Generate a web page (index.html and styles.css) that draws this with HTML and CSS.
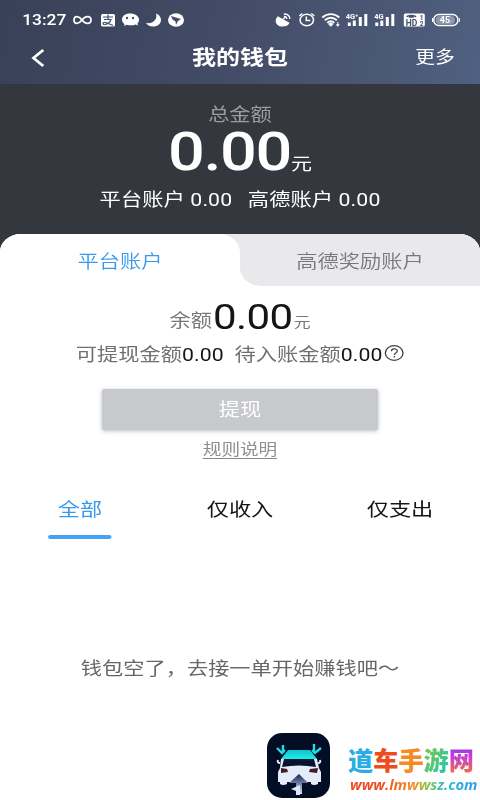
FILE: index.html
```html
<!DOCTYPE html>
<html lang="zh-CN">
<head>
<meta charset="utf-8">
<title>我的钱包</title>
<link rel="stylesheet" href="styles.css">
</head>
<body>
<div class="viewport">
<main class="screen">
  <header class="top">
    <div class="status">
      <span class="clock">13:27</span>
      <svg class="status-left" viewBox="72 0 114 24" preserveAspectRatio="none" fill="none">
        <path d="M82 20c-3-4-8-5-8 0s5 4 8 0 9-5 9 0-6 4-9 0" stroke="#fff" stroke-width="1.8"/>
        <rect x="101" y="14" width="14" height="12.500" rx="1.500" fill="#fff"/>
        <path d="M103 17h10M108 14.500v5M104 19.500h7c-1 3-4 5-7 5-2 0-1-3 2-2l7 3" stroke="#454f69" stroke-width="1.200"/>
        <path d="M130 13.500c-5 0-8 2.700-8 5.900 0 2 1 3.600 2.600 4.600l-.6 2 2.800-1.200c4 1 7.400.4 8.700-.4l2.500 1-.6-2c1-1 1.600-2.400 1.600-4 0-3.200-4-5.900-9-5.900z" fill="#fff"/>
        <circle cx="127" cy="18" r="1.200" fill="#454f69"/><circle cx="133" cy="18" r="1.200" fill="#454f69"/>
        <path d="M156 13.500c3 1 5 3.600 5 6.500 0 3.800-3.500 6.500-8 6.500-3.200 0-6-1.400-7-3.700 6 1.700 12-3 10-9.300z" fill="#fff"/>
        <ellipse cx="176" cy="20" rx="8" ry="6.700" fill="#fff"/>
        <path d="M171 16l10 3-3 2-2 4-.5-3.500-3-2z" fill="#454f69"/>
      </svg>
      <svg class="status-right" viewBox="274 0 186 24" preserveAspectRatio="none" fill="none">
        <path d="M277 17c-4 5 0 9 5 9 3 0 5-1 6-3zM281 20l4-3" fill="#fff" stroke="#fff" stroke-width="1"/>
        <path d="M283 16.500c2 0 3 1 3 2.500M283 14c4 0 6 2 6 5" stroke="#fff" stroke-width="1.300"/>
        <ellipse cx="306" cy="20" rx="6.700" ry="5.700" stroke="#fff" stroke-width="1.500"/>
        <path d="M305.500 16.500V20.500h4M298.500 16l3-2.500M313.500 16l-3-2.500" stroke="#fff" stroke-width="1.500"/>
        <path d="M321.500 17.500c5-4.500 12-4.500 17 0M324 20.300c4-3.400 8-3.400 12 0M326.500 22.800c2-2 5-2 7 0" stroke="#fff" stroke-width="1.900"/>
        <path d="M328 24l2-1.500 2 1.500-2 2zM337 22v4M335.500 24.500l1.500 1.500 1.500-1.500" fill="#fff" stroke="#fff"/>
        <path d="M348.500 22.500v3.500M353.500 20.500V26M359.500 17v9M365 14v12M376 22.500v3.500M381 20.500V26M386.500 17v9M392 14v12" stroke="#fff" stroke-width="3"/>
        <text x="345" y="18.500" class="net">4G⁺</text><text x="373.500" y="18.500" class="net">4G</text>
        <rect x="403" y="13.500" width="21" height="13" rx="1.500" fill="#fff"/>
        <path d="M406 17c1-2 8-2 9 0M408 17h5" stroke="#454f69" stroke-width="1.600"/>
        <text x="405" y="25.500" class="hd">HD</text><text x="419" y="19.500" class="hd-small">1</text><text x="419" y="25.500" class="hd-small">2</text>
        <rect x="433" y="14.500" width="24" height="11" rx="5" stroke="#fff" stroke-width="1.400"/>
        <rect x="435" y="16" width="19" height="8" rx="3.500" fill="#8e98ad"/>
        <path d="M458.500 18v4M431.700 18v4" stroke="#fff"/>
        <text x="439" y="23.300" class="charge">45</text>
      </svg>
    </div>
    <nav class="titlebar">
      <svg class="back" viewBox="0 0 12 18" preserveAspectRatio="none"><path d="M11 1L2 9l9 8" fill="none" stroke="#fff" stroke-width="2.500"/></svg>
      <h1>我的钱包</h1>
      <span class="more">更多</span>
    </nav>
  </header>
  <section class="summary">
    <div class="summary-label">总金额</div>
    <div class="total"><span class="total-num">0.00</span><span class="unit">元</span></div>
    <div class="accounts"><span>平台账户 0.00</span><span>高德账户 0.00</span></div>
  </section>
  <section class="sheet">
    <div class="tabs">
      <div class="tab active">平台账户</div>
      <div class="tab-shade"><div class="tab other">高德奖励账户</div></div>
    </div>
    <div class="balance"><span class="balance-label">余额</span><span class="balance-num">0.00</span><span class="balance-unit">元</span></div>
    <div class="details"><span>可提现金额<b>0.00</b></span><span class="pending">待入账金额<b>0.00</b></span>
      <svg class="help" viewBox="0 0 18 18"><circle cx="9" cy="9" r="7.800"/><path d="M6.500 7.200c0-3.400 5.200-3.300 5.200-.3 0 2-2.600 2-2.600 4.300M9.100 12.300v1.500"/></svg>
    </div>
    <div class="withdraw">提现</div>
    <div class="rules"><span>规则说明</span></div>
    <div class="filters">
      <div class="filter chosen">全部</div>
      <div class="filter">仅收入</div>
      <div class="filter">仅支出</div>
    </div>
    <p class="empty">钱包空了，去接一单开始赚钱吧～</p>
  </section>
</main>
<aside class="brand">
  <svg class="brand-logo" viewBox="0 0 63 65">
    <defs>
      <linearGradient id="roof" x2="0" y2="1"><stop stop-color="#18bfd2"/><stop offset="1" stop-color="#18f0e5"/></linearGradient>
      <linearGradient id="road" x2="0" y2="1"><stop stop-color="#142458"/><stop offset="1" stop-color="#dce5f5"/></linearGradient>
    </defs>
    <rect width="63" height="65" rx="15" fill="#030d26"/>
    <path d="M14 26h36l2 9 2 4v10h-3v2q-4 2-7 0v-2H20v2q-4 2-7 0v-2h-2V39l2-4z" fill="#e5ebf9"/>
    <path d="M11 27q-1 3 2 3M53 27q1 3-2 3" stroke="#e5ebf9" stroke-width="2" fill="none"/>
    <path d="M21 17h22l7 9H14z" fill="url(#roof)"/>
    <path d="M17 26h30l2 8q-17-3-34 0z" fill="#07132c"/>
    <path d="M14 35l6 1 1 3-7 1zM51 35l-8 1-1 3 8 1z" fill="#421b27"/>
    <path d="M32 41l9 9h-6v11h-6V50h-7z" fill="url(#road)"/>
    <path d="M24 56l9-4v10h-4v-4z" fill="#dce6fa"/>
    <path d="M10 15l5 5 3-3M16 12v8M45 17l3 3 6-5M47 11v9" fill="none" stroke="#20dce4" stroke-width="2.400"/>
  </svg>
  <div class="brand-text">
    <div class="brand-name"><span class="c1">道</span><span class="c2">车</span><span class="c3">手</span><span class="c4">游</span><span class="c5">网</span></div>
    <div class="brand-url">www.lmwwsz.com</div>
  </div>
</aside>
</div>
</body>
</html>
```
FILE: styles.css
```css
* { box-sizing: border-box; }
body { margin: 0; background: #fff; font-family: Roboto, "Noto Sans CJK SC", sans-serif; }
.viewport { position: relative; width: 480px; height: 800px; overflow: hidden; }
/* The interface is laid out on a 400px grid and widened to fill the window. */
.screen { width: 400px; height: 800px; transform: scaleX(1.2); transform-origin: 0 0; background: #35373f; font-size: 17.700px; white-space: nowrap; }
.top { height: 84px; background: linear-gradient(100deg, #394158 0%, #424b65 45%, #506080 100%); color: #fff; }
.status { height: 32px; padding: 8px 16.500px 0 18.500px; display: flex; align-items: center; }
.clock { font-size: 14.500px; width: 41.500px; font-weight: 500; }
.status-left { width: 95px; height: 24px; overflow: visible; transform: translateY(-8px); }
.status-right { width: 155px; height: 24px; margin-left: auto; overflow: visible; transform: translateY(-8px); }
.net { font: bold 7.500px Roboto; fill: #fff; }
.hd { font: bold 8.500px Roboto; fill: #454f69; }
.hd-small { font: bold 6.500px Roboto; fill: #454f69; }
.charge { font: bold 9px Roboto; fill: #fff; }
.titlebar { height: 52px; display: grid; grid-template-columns: 1fr auto 1fr; align-items: center; padding: 0 21px 0 26px; }
.back { width: 11px; height: 18px; }
h1 { margin: 0 5px 0 0; font-size: 20px; line-height: 30px; font-weight: 700; }
.more { justify-self: end; font-size: 16.500px; line-height: 24px; }
.summary { height: 150px; padding-top: 18px; color: #fff; text-align: center; }
.summary-label { height: 26px; line-height: 27px; color: #9b9da3; }
.total { height: 48px; display: flex; justify-content: center; align-items: baseline; line-height: 48px; }
.total-num { font-size: 54px; font-weight: 500; letter-spacing: -1.100px; }
.unit { font-size: 17.500px; }
.accounts { height: 46px; line-height: 48px; display: flex; justify-content: center; gap: 13px; font-size: 17.700px; letter-spacing: .1px; }
.sheet { height: 566px; background: #fff; border-radius: 18px 18px 0 0; overflow: hidden; }
.tabs { height: 52px; display: grid; grid-template-columns: 1fr 1fr; background: linear-gradient(90deg, #fff 45%, #e9e9eb 45%); }
.tab { height: 52px; line-height: 56px; text-align: center; font-weight: 350; }
.active { background: #fff; border-top-right-radius: 18px; color: #3999ed; }
.tab-shade { background: #fff; }
.other { background: #e9e9eb; border-bottom-left-radius: 18px; color: #77787b; }
.balance { height: 52px; padding-top: 6px; display: flex; justify-content: center; align-items: baseline; line-height: 52px; color: #777; }
.balance-label { position: relative; top: -2px; }
.balance-num { color: #151515; font-size: 35px; margin: 0 1px; letter-spacing: -.5px; }
.balance-unit { position: relative; top: -2px; font-size: 14px; }
.details { height: 29px; display: flex; align-items: center; justify-content: center; color: #707070; }
.details b { color: #151515; font-weight: 400; letter-spacing: .1px; }
.pending { margin-left: 9px; }
.help { width: 17px; height: 18px; margin-left: 1px; fill: none; stroke: #444; stroke-width: 1.2; }
.withdraw { width: 230px; height: 41px; margin: 22px auto 0; border-radius: 2px; background: #c7c9cc; box-shadow: 0 1px 4px #b7bdc2; color: #fff; text-align: center; line-height: 42px; }
.rules { height: 38px; line-height: 41px; text-align: center; color: #909090; font-size: 15.500px; }
.rules span { display: inline-block; line-height: 16px; border-bottom: 1px solid #888; }
.filters { height: 72px; display: grid; grid-template-columns: repeat(3, 1fr); padding-top: 15px; color: #151515; font-size: 18.500px; }
.filter { height: 56px; line-height: 54px; text-align: center; }
.chosen { color: #3999ed; }
.chosen::after { content: ""; display: block; width: 53px; height: 4px; margin: -2.500px auto 0; border-radius: 2px; background: #46a2f3; }
.empty { margin: 114px 0 0; line-height: 30px; text-align: center; color: #666; }
.brand { position: absolute; left: 267px; top: 733px; display: flex; gap: 18px; }
.brand-logo { width: 63px; height: 65px; }
.brand-text { padding-top: 10px; width: 132px; }
.brand-name { display: flex; font: 900 25.200px/32px "Noto Sans CJK SC", sans-serif; }
.c1 { color: #28aee5; } .c2 { color: #ed4c20; } .c3 { color: #f58b23; }
.c4 { color: transparent; background: linear-gradient(120deg, #85c63e, #20c8b2); background-clip: text; }
.c5 { color: transparent; background: linear-gradient(180deg, #7e3ae5, #c33ae0 40%, #f37831); background-clip: text; }
.brand-url { width: 132px; padding-left: 2px; font: italic 700 14.800px/18px "Open Sans", sans-serif; color: transparent; background: linear-gradient(90deg, #ed4c20 0 25%, #f58b23 50%, #81c944 60%, #28bbd8 75%, #2d96e5); background-clip: text; }
```
